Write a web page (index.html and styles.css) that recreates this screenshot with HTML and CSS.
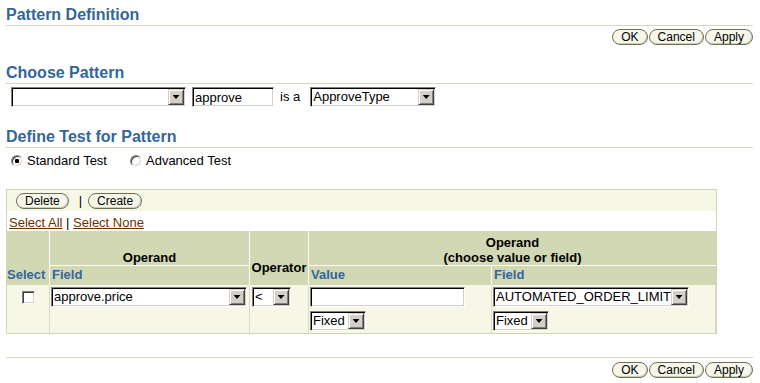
FILE: index.html
```html
<!DOCTYPE html>
<html lang="en">
<head>
	<meta charset="UTF-8">
	<title>Pattern Definition</title>
	<link rel="stylesheet" href="styles.css">
</head>
<body>
	<div id="page">
		<h2 class="section-title first">Pattern Definition</h2>
		<div class="actions">
			<button class="btn">OK</button><button class="btn">Cancel</button><button class="btn">Apply</button>
		</div>

		<h2 class="section-title">Choose Pattern</h2>
		<div class="pattern-row">
			<span class="select pattern-select"><span class="select-text"></span><span class="select-btn"></span></span>
			<input class="text-field name-field" type="text" value="approve">
			<span class="is-a">is a</span>
			<span class="select type-select"><span class="select-text">ApproveType</span><span class="select-btn"></span></span>
		</div>

		<h2 class="section-title test">Define Test for Pattern</h2>
		<div class="test-type">
			<label><input type="radio" name="testType" checked> Standard Test</label>
			<label><input type="radio" name="testType"> Advanced Test</label>
		</div>

		<div class="test-table">
			<div class="toolbar">
				<button class="btn">Delete</button><span class="sep">|</span><button class="btn">Create</button>
			</div>
			<div class="select-links"><a href="#">Select All</a> | <a href="#">Select None</a></div>
			<table>
				<colgroup>
					<col class="col-select">
					<col class="col-operand">
					<col class="col-operator">
					<col class="col-value">
					<col class="col-field">
				</colgroup>
				<tr>
					<th rowspan="2" class="label-head select-head">Select</th>
					<th class="group-head">Operand</th>
					<th rowspan="2" class="operator-head">Operator</th>
					<th colspan="2" class="group-head">Operand<br>(choose value or field)</th>
				</tr>
				<tr>
					<th class="label-head">Field</th>
					<th class="label-head">Value</th>
					<th class="label-head">Field</th>
				</tr>
				<tr class="data-row">
					<td class="check-cell"><input type="checkbox"></td>
					<td><span class="select field-select"><span class="select-text">approve.price</span><span class="select-btn"></span></span></td>
					<td class="op-cell"><span class="select op-select"><span class="select-text">&lt;</span><span class="select-btn"></span></span></td>
					<td>
						<div class="stack">
							<input class="text-field value-field" type="text" value="">
							<span class="select mode-select"><span class="select-text">Fixed</span><span class="select-btn"></span></span>
						</div>
					</td>
					<td>
						<div class="stack">
							<span class="select field-select"><span class="select-text">AUTOMATED_ORDER_LIMIT</span><span class="select-btn"></span></span>
							<span class="select mode-select"><span class="select-text">Fixed</span><span class="select-btn"></span></span>
						</div>
					</td>
				</tr>
			</table>
		</div>

		<div class="footer-actions">
			<button class="btn">OK</button><button class="btn">Cancel</button><button class="btn">Apply</button>
		</div>
	</div>
</body>
</html>
```

FILE: styles.css
```css
body {
	margin: 0;
	background: #fff;
	font: 13px/1.2 "Liberation Sans", Arial, sans-serif;
	color: #000;
}

#page {
	padding: 0 7px 0 6px;
}

.section-title {
	margin: 19px 0 0;
	padding-bottom: 1px;
	font-size: 16px;
	line-height: 18px;
	font-weight: bold;
	color: #336699;
	border-bottom: 1px solid #d6d8bd;
}

.section-title.first {
	margin-top: 6px;
}

.section-title.test {
	margin-top: 21px;
}

.actions,
.footer-actions {
	display: flex;
	justify-content: flex-end;
	gap: 1px;
	margin-top: 3px;
}

.footer-actions {
	margin-top: 23px;
	padding-top: 4px;
	border-top: 1px solid #d6d8bd;
}

.btn {
	height: 16px;
	margin: 0;
	padding: 0 8px;
	border: 1px solid #6e6e57;
	border-radius: 8px;
	background: #f6f6ea;
	box-shadow: inset -1px -1px 0 #cfcfb8;
	font: 12px/14px "Liberation Sans", Arial, sans-serif;
	color: #000;
	cursor: pointer;
}

/* choose pattern row */
.pattern-row {
	display: flex;
	align-items: center;
	gap: 6px;
	height: 20px;
	margin-top: 3px;
	padding-left: 5px;
}

.is-a {
	margin-right: 4px;
}

/* windows-classic style fields */
.select,
.text-field {
	box-sizing: border-box;
	height: 20px;
	border: 1px solid;
	border-color: #808080 #fff #fff #808080;
	box-shadow: inset 1px 1px 0 #000, inset -1px -1px 0 #d4d0c8;
	background: #fff;
}

.select {
	display: inline-flex;
	padding: 1px;
	vertical-align: top;
}

.select-text {
	flex: 1;
	min-width: 0;
	padding-left: 1px;
	line-height: 16px;
	white-space: nowrap;
	overflow: hidden;
}

.select-btn {
	flex: none;
	display: flex;
	align-items: center;
	justify-content: center;
	width: 16px;
	box-sizing: border-box;
	background: #d4d0c8;
	border: 1px solid;
	border-color: #d4d0c8 #404040 #404040 #d4d0c8;
	box-shadow: inset 1px 1px 0 #fff, inset -1px -1px 0 #808080;
}

.select-btn:after {
	content: "";
	width: 7px;
	height: 4px;
	background: #000;
	clip-path: polygon(0 0, 100% 0, 50% 100%);
}

.text-field {
	margin: 0;
	padding: 1px 2px;
	font: 13px "Liberation Sans", Arial, sans-serif;
	outline: none;
}

.pattern-select { width: 175px; }
.type-select { width: 126px; }
.name-field { width: 82px; }
.field-select { width: 196px; }
.op-select { width: 39px; }
.mode-select { width: 56px; }
.value-field { width: 155px; }

/* radios */
.test-type {
	display: flex;
	gap: 23px;
	margin-top: 5px;
	padding-left: 5px;
	line-height: 16px;
}

.test-type label {
	display: flex;
	align-items: center;
	gap: 4px;
}

input[type="radio"],
input[type="checkbox"] {
	appearance: none;
	margin: 0;
	box-sizing: border-box;
	border: 1px solid;
	border-color: #808080 #fff #fff #808080;
	box-shadow: inset 1px 1px 0 #404040, inset -1px -1px 0 #d4d0c8;
	background: #fff;
}

input[type="radio"] {
	width: 12px;
	height: 12px;
	border-radius: 50%;
}

input[type="radio"]:checked {
	background: radial-gradient(circle, #000 0 2px, #fff 2.5px);
}

input[type="checkbox"] {
	display: block;
	width: 13px;
	height: 13px;
	margin: 0 auto;
}

/* test table */
.test-table {
	width: 711px;
	box-sizing: border-box;
	margin-top: 20px;
	border: 1px solid #d2d6b4;
}

.toolbar {
	display: flex;
	align-items: center;
	height: 21px;
	padding-left: 9px;
	background: #f7f7e7;
}

.sep {
	margin: 0 6px 0 10px;
}

.select-links {
	padding: 3px 0 0 2px;
	line-height: 17px;
	background: #fff;
}

.select-links a {
	color: #663300;
}

table {
	width: 100%;
	border-spacing: 0;
	table-layout: fixed;
}

.col-select { width: 43px; }
.col-operand { width: 200px; }
.col-operator { width: 59px; }
.col-value { width: 183px; }
.col-field { width: 224px; }

th {
	box-sizing: border-box;
	padding: 0;
	background: #d2d8b4;
	font-size: 13px;
	line-height: 15px;
	font-weight: bold;
	vertical-align: bottom;
	border-right: 1px solid #fff;
}

th:last-child,
td:last-child {
	border-right: 0;
}

.group-head {
	height: 35px;
	text-align: center;
	border-bottom: 1px solid #fff;
}

.label-head {
	height: 19px;
	padding: 0 0 3px 2px;
	text-align: left;
	color: #336699;
}

.select-head {
	padding-left: 0;
}

.operator-head {
	padding-bottom: 10px;
	text-align: center;
}

.data-row td {
	box-sizing: border-box;
	height: 48px;
	padding: 2px 0 2px 1px;
	vertical-align: top;
	background: #f7f7e7;
	border-right: 1px solid #dcdcc6;
}

.data-row .check-cell {
	padding: 6px 0 0;
}

.data-row .op-cell {
	padding-left: 2px;
}

.stack {
	display: flex;
	flex-direction: column;
	align-items: flex-start;
	gap: 4px;
}
```
